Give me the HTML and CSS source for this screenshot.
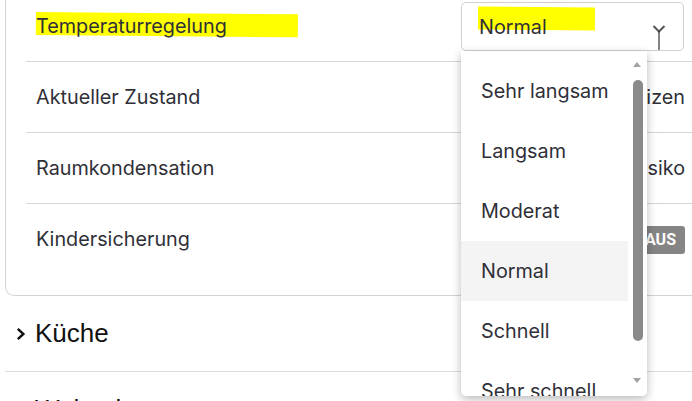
FILE: index.html
```html
<!DOCTYPE html>
<html lang="de">
<head>
<meta charset="utf-8">
<link rel="stylesheet" href="styles.css">
</head>
<body>
<div class="page">
  <div class="card">
    <div class="row">
      <span class="label marked">Temperaturregelung</span>
      <div class="select">
        <span class="select-value marked-sm">Normal</span>
        <svg class="select-chev" width="16" height="30" viewBox="0 0 16 30">
          <path d="M2.5 6 L8 11.5 L13.5 6" fill="none" stroke="#555" stroke-width="2"/>
          <path d="M8 11 V30" fill="none" stroke="#333" stroke-width="1.2"/>
        </svg>
        <div class="menu">
          <ul class="options">
            <li>Sehr langsam</li>
            <li>Langsam</li>
            <li>Moderat</li>
            <li class="active">Normal</li>
            <li>Schnell</li>
            <li>Sehr schnell</li>
          </ul>
          <div class="scrollbar">
            <span class="arrow arrow-up"></span>
            <span class="thumb"></span>
            <span class="arrow arrow-down"></span>
          </div>
        </div>
      </div>
    </div>
    <div class="row">
      <span class="label">Aktueller Zustand</span>
      <span class="value">Heizen</span>
    </div>
    <div class="row">
      <span class="label">Raumkondensation</span>
      <span class="value">Kein Risiko</span>
    </div>
    <div class="row">
      <span class="label">Kindersicherung</span>
      <span class="badge">AUS</span>
    </div>
  </div>
  <div class="section">
    <svg class="sec-chev" width="10" height="14" viewBox="0 0 10 14">
      <path d="M1.8 1.8 L7.4 7 L1.8 12.2" fill="none" stroke="#111" stroke-width="2.4"/>
    </svg>
    <span class="sec-title">Küche</span>
  </div>
  <div class="section">
    <svg class="sec-chev" width="10" height="14" viewBox="0 0 10 14">
      <path d="M1.8 1.8 L7.4 7 L1.8 12.2" fill="none" stroke="#111" stroke-width="2.4"/>
    </svg>
    <span class="sec-title">Wohnzimmer</span>
  </div>
</div>
</body>
</html>
```
FILE: styles.css
```css
html, body {
  margin: 0;
  padding: 0;
  background: #fff;
  overflow: hidden;
}
.page {
  width: 692px;
  height: 401px;
  overflow: hidden;
  padding-left: 5px;
  box-sizing: border-box;
  font-family: Inter, "Liberation Sans", sans-serif;
  color: #2f2f38;
}
.card {
  margin-top: -9px;
  margin-right: -30px;
  border: 1px solid #d3d3d3;
  border-top: 0;
  border-radius: 0 0 9px 9px;
  padding-bottom: 21px;
}
.row {
  margin-left: 20px;
  padding: 0 36px 0 10px;
  height: 70px;
  border-bottom: 1px solid #d6d6d6;
  display: flex;
  align-items: center;
  justify-content: space-between;
  font-size: 19.8px;
}
.row:last-child {
  border-bottom: 0;
}
.label {
  position: relative;
  z-index: 0;
}
.marked::before {
  content: "";
  position: absolute;
  left: 0;
  top: -2px;
  width: 262px;
  height: 23px;
  background: #ffff00;
  transform: rotate(0.5deg);
  transform-origin: left top;
  z-index: -1;
}
.select {
  position: relative;
  width: 204px;
  height: 47px;
  margin-top: 1px;
  border: 1px solid #cfcfcf;
  border-radius: 5px;
  display: flex;
  align-items: center;
  padding-left: 17px;
  box-sizing: content-box;
  margin-right: 1px;
  background: #fff;
  z-index: 1;
}
.select-value {
  position: relative;
  flex: 1;
  z-index: 0;
}
.marked-sm::before {
  content: "";
  position: absolute;
  left: -1px;
  top: -8px;
  width: 117px;
  height: 23px;
  background: #ffff00;
  transform: rotate(0.4deg);
  z-index: -1;
}
.select-chev {
  position: absolute;
  right: 16px;
  top: 17px;
}
.menu {
  position: absolute;
  top: 48px;
  left: -1px;
  width: 186px;
  height: 345px;
  background: #fff;
  border-radius: 0 0 5px 5px;
  box-shadow: 0 3px 10px rgba(0, 0, 0, 0.28);
  overflow: hidden;
  z-index: 2;
}
.options {
  list-style: none;
  margin: 0;
  padding: 10px 0 0 0;
  width: 167px;
}
.options li {
  height: 60px;
  line-height: 60px;
  padding-left: 20px;
  font-size: 19.8px;
  white-space: nowrap;
}
.options li.active {
  background: #f4f4f4;
}
.scrollbar {
  position: absolute;
  top: 0;
  right: 0;
  width: 19px;
  height: 100%;
  background: #fff;
}
.arrow {
  position: absolute;
  left: 5px;
  width: 0;
  height: 0;
  border-left: 4.5px solid transparent;
  border-right: 4.5px solid transparent;
}
.arrow-up {
  top: 11px;
  border-bottom: 5px solid #a3a3a3;
}
.arrow-down {
  top: 327px;
  border-top: 5px solid #a3a3a3;
}
.thumb {
  position: absolute;
  left: 5px;
  top: 29px;
  width: 10px;
  height: 261px;
  border-radius: 5px;
  background: #8a8a8a;
}
.badge {
  background: #858585;
  color: #fff;
  font-family: Roboto, "Liberation Sans", sans-serif;
  font-weight: 700;
  font-size: 16px;
  height: 28px;
  line-height: 28px;
  padding: 0 9px;
  border-radius: 3px;
  margin-top: 1px;
}
.section {
  height: 75px;
  border-bottom: 1px solid #dcdcdc;
  display: flex;
  align-items: center;
  padding-left: 11px;
  gap: 9px;
}
.sec-chev {
  margin-top: 1px;
}
.sec-title {
  font-family: "Liberation Sans", Arial, sans-serif;
  font-size: 26px;
  color: #111;
}
```
